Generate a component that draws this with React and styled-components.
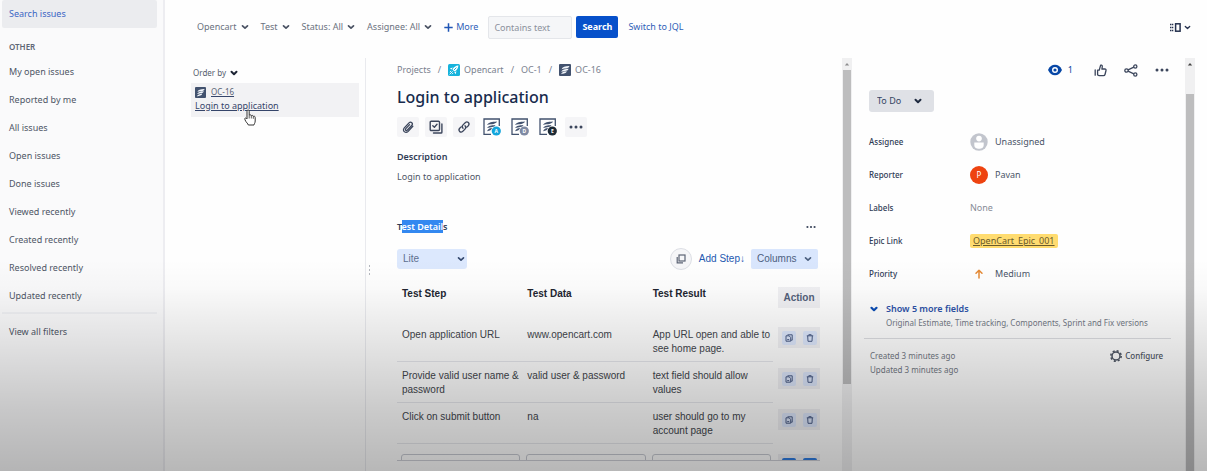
import React from "react";
import styled, { createGlobalStyle, css } from "styled-components";

const GlobalStyle = createGlobalStyle`
  *, *::before, *::after { box-sizing: border-box; }
  body { margin: 0; background: #fefefe; }
  body, button, input, select {
    font-family: "Noto Sans", "Open Sans", sans-serif;
    font-size: 9px;
    line-height: 14px;
    color: #4e5666;
  }
  button, input, select { margin: 0; padding: 0; border: 0; background: none; }
  button { display: inline-flex; align-items: center; justify-content: center; }
  a { color: inherit; text-decoration: none; }
  h1, h2, p, ul, dl, dd { margin: 0; padding: 0; }
  svg { display: block; flex: none; }
`;

const Shell = styled.div`
  position: relative;
  display: flex;
  height: 100vh;
  overflow: hidden;
`;

const Shade = styled.div`
  position: absolute;
  inset: auto 0 0 0;
  height: 45%;
  pointer-events: none;
  background: linear-gradient(
    rgba(0, 0, 0, 0) 0%,
    rgba(0, 0, 0, 0.02) 14%,
    rgba(0, 0, 0, 0.1) 40%,
    rgba(0, 0, 0, 0.2) 70%,
    rgba(0, 0, 0, 0.28) 100%
  );
`;

/* Sidebar */

const Sidebar = styled.nav`
  flex: none;
  width: 165px;
  padding: 0 6px 0 2px;
  border-right: 2px solid #ededf1;
  background: #fafafb;
`;

const NavList = styled.ul`
  list-style: none;
`;

const NavLink = styled.a`
  display: flex;
  align-items: center;
  height: 28px;
  padding: 0 7px;
  border-radius: 2px;
  ${(p) =>
    p.$active &&
    css`
      background: #ebecef;
      color: #3b66c4;
    `}
`;

const NavHeading = styled.h2`
  padding: 12px 7px 4px;
  font-size: 8px;
  line-height: 14px;
  font-weight: 600;
  color: #5e6675;
`;

const NavRule = styled.hr`
  margin: 2px 0 4px;
  border: 0;
  border-top: 2px solid #f0f1f4;
`;

/* Main column */

const Main = styled.main`
  flex: 1;
  min-width: 0;
  display: flex;
  flex-direction: column;
`;

const Toolbar = styled.header`
  display: flex;
  align-items: center;
  gap: 12px;
  height: 58px;
  padding: 0 16px 4px 32px;
`;

const FilterButton = styled.button`
  gap: 4px;
  color: #6b7280;
  svg { color: #4a5263; }
`;

const LinkButton = styled.button`
  gap: 3px;
  color: #2f5fb8;
`;

const SearchForm = styled.form`
  display: flex;
  align-items: center;
  gap: 4px;
  margin: 0 -2px;
`;

const SearchInput = styled.input`
  width: 84px;
  height: 23px;
  padding: 0 5px;
  border: 1px solid #e4e6ea;
  border-radius: 2px;
  background: #f5f6f8;
  &::placeholder { color: #8b919c; opacity: 1; }
`;

const PrimaryButton = styled.button`
  width: 42px;
  height: 22px;
  border-radius: 2px;
  background: #0650ca;
  color: #fff;
  font-weight: 700;
`;

const ViewButton = styled.button`
  gap: 3px;
  margin-left: auto;
  color: #26324f;
`;

const Columns = styled.div`
  flex: 1;
  min-height: 0;
  display: grid;
  grid-template-columns: 201px minmax(0, 1fr) 343px;
  padding-right: 12px;
`;

/* Issue list */

const ListPane = styled.section`
  padding: 8px 6px 0 26px;
  border-right: 1px solid #e9eaee;
`;

const OrderButton = styled.button`
  gap: 4px;
  padding: 0 2px;
  font-size: 8px;
  color: #555d6c;
  svg { color: #1c2434; }
`;

const IssueCard = styled.a`
  position: relative;
  display: block;
  height: 34px;
  margin-top: 3px;
  padding: 2px 4px;
  background: #f2f2f4;
  text-decoration: underline;
  color: #35456a;
`;

const IssueKey = styled.span`
  display: flex;
  align-items: center;
  gap: 5px;
  font-size: 8px;
  color: #596273;
`;

const Pointer = styled.svg`
  position: absolute;
  left: 53px;
  top: 26px;
`;

/* Issue detail */

const DetailPane = styled.section`
  display: flex;
  min-width: 0;
  min-height: 0;
`;

const Grip = styled.div`
  display: flex;
  flex: none;
  width: 31px;
  padding: 207px 0 0 2px;
`;

const DetailBody = styled.div`
  flex: 1;
  min-width: 0;
  display: flex;
  flex-direction: column;
  padding: 5px 22px 10px 0;
`;

const Breadcrumbs = styled.nav`
  display: flex;
  align-items: center;
  gap: 7px;
  color: #7a818e;
`;

const Crumb = styled.a`
  display: inline-flex;
  align-items: center;
  gap: 4px;
`;

const Title = styled.h1`
  margin-top: 9px;
  font-size: 16px;
  line-height: 22px;
  font-weight: 500;
  color: #172b4d;
`;

const Actions = styled.div`
  display: flex;
  gap: 6px;
  margin-top: 9px;
`;

const ActionButton = styled.button`
  width: 22px;
  height: 20px;
  border-radius: 2px;
  background: ${(p) => (p.$plain ? "none" : "#f5f5f7")};
  color: #3c465c;
`;

const Heading = styled.h2`
  font-size: 9px;
  line-height: 14px;
  font-weight: 600;
  color: #303c55;
`;

const Description = styled.section`
  margin-top: 13px;
  p { margin-top: 6px; }
`;

const TestHeader = styled.div`
  display: flex;
  align-items: center;
  justify-content: space-between;
  margin-top: 36px;
`;

const Selected = styled.mark`
  background: #3388f0;
  color: #fff;
`;

const MoreButton = styled.button`
  width: 18px;
  height: 14px;
  color: #3c465c;
`;

const TestControls = styled.div`
  display: flex;
  align-items: center;
  margin: 14px 2px 10px 0;
  font-family: "Liberation Sans", Arial, sans-serif;
`;

const SelectBox = styled.label`
  display: grid;
  align-items: center;
  width: ${(p) => p.$width};
  height: ${(p) => p.$height};
  border-radius: 3px;
  background: ${(p) => p.$fill};
  color: ${(p) => p.$ink};
  select, svg { grid-area: 1 / 1; }
  select {
    appearance: none;
    width: 100%;
    height: 100%;
    padding: 0 ${(p) => p.$inset};
    font-family: inherit;
    font-size: ${(p) => p.$size};
    color: ${(p) => p.$text};
  }
  svg {
    justify-self: end;
    margin-right: ${(p) => p.$arrow};
    pointer-events: none;
  }
`;

const RoundButton = styled.button`
  width: 22px;
  height: 22px;
  margin-left: auto;
  border: 1px solid #dddfe5;
  border-radius: 50%;
  background: #f6f6f8;
  color: #5d6475;
`;

const AddStep = styled.button`
  margin: 0 6px 0 7px;
  font-family: inherit;
  font-size: 10px;
  color: #2458b0;
`;

const ColumnsButton = styled.button`
  justify-content: space-between;
  width: 67px;
  height: 20px;
  padding: 0 6px;
  border-radius: 2px;
  background: #d9e6fd;
  font-family: inherit;
  font-size: 10px;
  color: #4c607f;
`;

const TableFrame = styled.div`
  flex: 1;
  min-height: 0;
  overflow: hidden;
  border-bottom: 1px solid #cdcfd6;
`;

const StepTable = styled.table`
  width: 100%;
  table-layout: fixed;
  border-collapse: separate;
  border-spacing: 0;
  font-family: "Liberation Sans", Arial, sans-serif;
  font-size: 10px;
  line-height: 14px;
  text-align: left;
  color: #42454c;
`;

const HeadCell = styled.th`
  height: 41px;
  padding: 7px 5px;
  vertical-align: top;
  font-weight: 700;
  color: #222530;
  &:last-child { width: 47px; padding-right: 0; }
`;

const Cell = styled.td`
  height: 41px;
  padding: 7px 2px 5px 5px;
  vertical-align: top;
  border-bottom: 1px solid #e6e7ec;
`;

const ActionCell = styled.td`
  padding: 6px 0 0 5px;
  vertical-align: top;
`;

const ActionBox = styled.div`
  display: flex;
  align-items: center;
  justify-content: space-around;
  height: 21px;
  background: #f0f0f3;
  color: #53607a;
`;

const StepButton = styled.button`
  width: 14px;
  height: 14px;
  border-radius: 2px;
  background: ${(p) => (p.$strong ? "#2d7be0" : "#dbe5fa")};
  color: #4a5c85;
`;

const EntryCell = styled.td`
  padding: 10px 2px 0 4px;
  vertical-align: top;
  &:last-child { padding: 10px 0 0 5px; }
`;

const EntryInput = styled.input`
  display: block;
  width: 100%;
  height: 24px;
  border: 1px solid #c6c9d1;
  border-radius: 3px;
`;

/* Scroll bars */

const ScrollTrack = styled.div`
  flex: none;
  display: flex;
  flex-direction: column;
  align-items: center;
  width: 10px;
  background: #f0f0f1;
  color: ${(p) => p.$arrow};
`;

const ScrollThumb = styled.div`
  width: 8px;
  height: ${(p) => p.$length};
  margin-top: ${(p) => p.$offset};
  background: #bdbdbe;
`;

/* Side panel */

const SidePane = styled.aside`
  display: flex;
  min-height: 0;
`;

const SideBody = styled.div`
  flex: 1;
  min-width: 0;
  padding: 4px 14px 0 12px;
`;

const SideActions = styled.div`
  display: flex;
  align-items: center;
  justify-content: flex-end;
  gap: 13px;
  height: 16px;
  color: #3c465c;
`;

const WatchButton = styled.button`
  gap: 6px;
  margin-right: 5px;
  color: #0b47a1;
`;

const StatusRow = styled.div`
  display: flex;
  margin: 12px 0 13px 5px;
`;

const Fields = styled.dl`
  padding-left: 5px;
`;

const Field = styled.div`
  display: grid;
  grid-template-columns: 101px 1fr;
  align-items: center;
  height: 33px;
`;

const FieldName = styled.dt`
  font-size: 8px;
  font-weight: 500;
  color: #303c55;
`;

const FieldValue = styled.dd`
  display: flex;
  align-items: center;
  gap: 7px;
  color: ${(p) => (p.$muted ? "#878c96" : "#4a5568")};
`;

const Avatar = styled.span`
  display: grid;
  place-items: center;
  width: 18px;
  height: 18px;
  border-radius: 50%;
  background: #ee4310;
  font-size: 8px;
  color: #fff;
`;

const EpicTag = styled.a`
  padding: 0 3px;
  border-radius: 2px;
  background: #ffdc70;
  text-decoration: underline;
  color: #6a5a2c;
`;

const MoreFields = styled.button`
  display: grid;
  grid-template-columns: 16px 1fr;
  row-gap: 0;
  align-items: center;
  justify-content: start;
  width: 100%;
  margin-top: 12px;
  padding-left: 6px;
  text-align: left;
  color: #0b4db5;
  strong { font-weight: 600; color: #2c52a8; }
  small { grid-column: 2; font-size: 8px; line-height: 13px; color: #737985; }
`;

const SideFooter = styled.footer`
  display: flex;
  justify-content: space-between;
  align-items: flex-start;
  margin-top: 9px;
  padding: 10px 8px 0 6px;
  border-top: 1px solid #dcdde1;
  font-size: 8px;
  color: #727883;
`;

const ConfigureButton = styled.button`
  gap: 3px;
  font-size: 8px;
  font-weight: 500;
  color: #4d5563;
`;

/* Drawings */

const Chevron = ({ size = 8, weight = 2 }) => (
  <svg width={size} height={size} viewBox="0 0 8 8" fill="none" stroke="currentColor" strokeWidth={weight} strokeLinecap="round" strokeLinejoin="round" aria-hidden="true">
    <path d="M1.5 2.8 4 5.2 6.5 2.8" />
  </svg>
);

const TestIcon = ({ size = 12 }) => (
  <svg width={size} height={size} viewBox="0 0 12 12" aria-hidden="true">
    <rect width="12" height="12" rx="1" fill="#42526e" />
    <path d="M2.6 5.2C3.4 2.9 6 2.4 10.4 2.1 10 4.6 7 4.3 2.600 5.200ZM2.200 7.700C3.400 5.400 6 5.100 9.600 4.700 9 7.200 6 6.800 2.200 7.700ZM2 10.200C3 8 4.800 7.700 7.800 7.300 7.200 9.700 5 9.300 2 10.200Z" fill="#f2f6fb" />
  </svg>
);

const ProjectIcon = () => (
  <svg width="12" height="12" viewBox="0 0 12 12" aria-hidden="true">
    <rect width="12" height="12" rx="1.5" fill="#16b3dc" />
    <path d="M10.400 1.600C7.800 1.800 5.600 3.200 4.500 5.500L6.500 7.500C8.900 6.400 10.300 4.200 10.400 1.600Z" fill="#fff" />
    <path d="M4.800 3.500 1.800 4.400 3.700 5.600ZM8.400 7.300 7.700 10.200 6.300 8.300Z" fill="#fff" />
    <path d="M4.600 7.400 1.600 10.400M3.100 6.900 1.800 8.200M5.200 8.900 3.900 10.200" stroke="#fff" strokeWidth=".9" />
    <path d="M8.400 3.600 6 6" stroke="#16b3dc" strokeWidth="1" />
  </svg>
);

const BadgeIcon = ({ letter, fill }) => (
  <svg width="20" height="20" viewBox="0 0 20 20" aria-hidden="true">
    <path d="M17.300 9V2H2v15.300h7" fill="none" stroke="#42526e" strokeWidth="1.300" />
    <path d="M5 8C7 5 9.500 5 15 4.500 13.800 7.400 10 6.800 5 8ZM5 11C7 8.300 9 8.400 13.500 7.900 12.300 10.400 9 9.900 5 11ZM5 14.200C6.300 11.600 7.500 11.300 10 11 9.500 13.300 8 13.500 5 14.200Z" fill="#42526e" />
    <circle cx="14.300" cy="14" r="4.600" fill={fill} />
    <text x="14.300" y="16" textAnchor="middle" fontFamily="Noto Sans, sans-serif" fontSize="5" fontWeight="700" fill="#fff">{letter}</text>
  </svg>
);

const Dots = ({ width = 14 }) => (
  <svg width={width} height="4" viewBox="0 0 14 4" fill="currentColor" aria-hidden="true">
    <circle cx="2" cy="2" r="1.5" />
    <circle cx="7" cy="2" r="1.5" />
    <circle cx="12" cy="2" r="1.5" />
  </svg>
);

const ClipIcon = () => (
  <svg width="14" height="14" viewBox="0 0 14 14" fill="none" stroke="currentColor" strokeWidth="1.3" strokeLinecap="round" aria-hidden="true">
    <path d="M11.8 6.3 7.2 11.4C4.5 14 .8 10.6 3.3 7.9L8 2.9C10 1 12.5 3.4 10.7 5.4L6.4 10C5.2 11.2 3.7 9.8 4.8 8.6L8.6 4.6" />
  </svg>
);

const ChecklistIcon = () => (
  <svg width="14" height="14" viewBox="0 0 14 14" fill="none" stroke="currentColor" strokeWidth="1.4" strokeLinecap="round" strokeLinejoin="round" aria-hidden="true">
    <rect x="1.2" y="1.2" width="9.3" height="9.3" rx="1" />
    <path d="M3.8 5.7 5.4 7.2 8 4.2M12.9 4v8.2c0 .5-.3.8-.8.8H4.5" />
  </svg>
);

const ChainIcon = () => (
  <svg width="14" height="14" viewBox="0 0 14 14" fill="none" stroke="currentColor" strokeWidth="1.3" strokeLinecap="round" aria-hidden="true">
    <path d="M6 8.2C4.9 7 5.1 5.8 6 4.9L8.2 2.7C10.5.7 13.3 3.4 11.3 5.7L9.9 7.1M8 5.8C9.1 7 8.9 8.2 8 9.1L5.8 11.3C3.5 13.3.7 10.6 2.7 8.3L4.1 6.9" />
  </svg>
);

const StackIcon = ({ size = 10 }) => (
  <svg width={size} height={size} viewBox="0 0 10 10" fill="none" stroke="currentColor" strokeWidth="1.2" aria-hidden="true">
    <rect x="3" y="1" width="6" height="6" />
    <path d="M1.2 3v5.8H7" />
  </svg>
);

const CopyStepIcon = () => (
  <svg width="8" height="8" viewBox="0 0 8 8" fill="none" stroke="currentColor" aria-hidden="true">
    <path d="M2.5 .8h4.7v5.400H6M1 1.800v5.400h4.700V3.600L4.200 1.800z" />
    <path d="M2.200 5.600h2" />
  </svg>
);

const TrashIcon = () => (
  <svg width="8" height="8" viewBox="0 0 8 8" fill="none" stroke="currentColor" aria-hidden="true">
    <path d="M.8 1.8h6.4M2.8 1.6V.7h2.4v.9M1.7 2l.3 5.3h4L6.3 2" />
  </svg>
);

const EyeIcon = () => (
  <svg width="14" height="12" viewBox="0 0 14 12" aria-hidden="true">
    <path d="M0 6C1.600 2.400 4 .8 7 .8S12.400 2.400 14 6C12.400 9.600 10 11.200 7 11.200S1.600 9.600 0 6Z" fill="#0747a6" />
    <circle cx="7" cy="6" r="2.300" fill="none" stroke="#fff" strokeWidth="1.400" />
  </svg>
);

const ThumbIcon = () => (
  <svg width="13" height="13" viewBox="0 0 13 13" fill="none" stroke="currentColor" strokeWidth="1.300" strokeLinejoin="round" strokeLinecap="round" aria-hidden="true">
    <path d="M1.200 6v5.200M3.600 6.200h1.600L6.500 1.600C6.700.8 8.500.9 8.300 2.700L7.900 5h2.900c1 0 1.400.7 1.200 1.500l-1 4c-.2.8-.7 1.200-1.500 1.200H5.200L3.600 11Z" />
  </svg>
);

const ShareIcon = () => (
  <svg width="14" height="13" viewBox="0 0 14 13" fill="none" stroke="currentColor" strokeWidth="1.300" aria-hidden="true">
    <circle cx="2.500" cy="6.500" r="1.700" />
    <circle cx="11.300" cy="2.500" r="1.600" />
    <circle cx="11.300" cy="10.500" r="1.600" />
    <path d="M4.100 5.800 9.800 3.200M4.100 7.200 9.800 9.800" />
  </svg>
);

const PersonIcon = () => (
  <svg width="18" height="18" viewBox="0 0 18 18" aria-hidden="true">
    <circle cx="9" cy="9" r="8.700" fill="#c2c5cd" />
    <circle cx="9" cy="5.600" r="2.800" fill="#fff" />
    <path d="M4.300 9.500h9.400v2.200c0 3-2 4-4.700 4s-4.700-1-4.700-4Z" fill="#fff" />
  </svg>
);

const PriorityIcon = () => (
  <svg width="18" height="10" viewBox="0 0 18 10" fill="none" stroke="#e58a35" strokeWidth="1.500" strokeLinecap="round" strokeLinejoin="round" aria-hidden="true">
    <path d="M9 9V1.500M6 4.300 9 1.300l3 3" />
  </svg>
);

const GearIcon = () => (
  <svg width="12" height="12" viewBox="0 0 12 12" fill="none" stroke="currentColor" aria-hidden="true">
    <circle cx="6" cy="6" r="4" strokeWidth="1.500" />
    <circle cx="6" cy="6" r="5.200" strokeWidth="1.500" strokeDasharray="2.084 2" />
  </svg>
);

const LayoutIcon = () => (
  <svg width="11" height="9" viewBox="0 0 11 9" aria-hidden="true">
    <path d="M0 1.500h3.500M0 4.500h3.500M0 7.500h3.500" stroke="currentColor" strokeWidth="1.600" strokeDasharray="1.400 .5" />
    <rect x="5.600" y=".8" width="4.500" height="7.400" fill="none" stroke="currentColor" strokeWidth="1.500" />
  </svg>
);

const PlusIcon = () => (
  <svg width="9" height="9" viewBox="0 0 9 9" stroke="#1f55b5" strokeWidth="1.500" aria-hidden="true">
    <path d="M4.500 .3v8.400M.3 4.500h8.400" />
  </svg>
);

const UpArrow = () => (
  <svg width="10" height="12" viewBox="0 0 10 12" fill="currentColor" aria-hidden="true">
    <path d="M2.800 7.500 5 5l2.200 2.500Z" />
  </svg>
);

const GripDots = () => (
  <svg width="3" height="10" viewBox="0 0 3 10" fill="#b4b7be" aria-hidden="true">
    <rect x="1" width="1" height="2" />
    <rect x="1" y="4" width="1" height="2" />
    <rect x="1" y="8" width="1" height="2" />
  </svg>
);

const HandPointer = () => (
  <Pointer width="12" height="17" viewBox="0 0 12 17" aria-hidden="true">
    <path d="M3 10V2.200C3 .5 5.200.5 5.200 2.200V6.300C5.500 5.500 7.200 5.600 7.300 6.800 7.800 6 9.200 6.300 9.300 7.500 9.900 6.900 11.200 7.200 11.200 8.500V12C11.200 14 10 15 10 16H4.300C4 14.500 2 13.500 1 10.800.200 9 1.600 8.200 3 10Z" fill="#fff" stroke="#333" strokeWidth="1" strokeLinejoin="round" />
    <path d="M5.200 6.300V9.500M7.300 7V9.500M9.300 7.600V9.800" stroke="#333" strokeWidth=".8" />
  </Pointer>
);

const navItems = [
  "My open issues",
  "Reported by me",
  "All issues",
  "Open issues",
  "Done issues",
  "Viewed recently",
  "Created recently",
  "Resolved recently",
  "Updated recently",
];

const filters = ["Opencart", "Test", "Status: All", "Assignee: All"];

const steps = [
  ["Open application URL", "www.opencart.com", "App URL open and able to see home page."],
  ["Provide valid user name & password", "valid user & password", "text field should allow values"],
  ["Click on submit button", "na", "user should go to my account page"],
];

export default function App() {
  return (
    <Shell>
      <GlobalStyle />
      <Sidebar aria-label="Filters">
        <NavLink href="#search" $active>Search issues</NavLink>
        <NavHeading>OTHER</NavHeading>
        <NavList>
          {navItems.map((item) => (
            <li key={item}><NavLink href="#filter">{item}</NavLink></li>
          ))}
        </NavList>
        <NavRule />
        <NavLink href="#all">View all filters</NavLink>
      </Sidebar>

      <Main>
        <Toolbar>
          {filters.map((label) => (
            <FilterButton key={label} type="button">{label}<Chevron weight={1.7} /></FilterButton>
          ))}
          <LinkButton type="button"><PlusIcon />More</LinkButton>
          <SearchForm onSubmit={(e) => e.preventDefault()}>
            <SearchInput placeholder="Contains text" aria-label="Contains text" />
            <PrimaryButton type="submit">Search</PrimaryButton>
          </SearchForm>
          <LinkButton type="button">Switch to JQL</LinkButton>
          <ViewButton type="button" aria-label="Change view"><LayoutIcon /><Chevron size={7} weight={1.5} /></ViewButton>
        </Toolbar>

        <Columns>
          <ListPane>
            <OrderButton type="button">Order by<Chevron /></OrderButton>
            <IssueCard href="#OC-16">
              <IssueKey><TestIcon size={11} />OC-16</IssueKey>
              Login to application
              <HandPointer />
            </IssueCard>
          </ListPane>

          <DetailPane>
            <Grip><GripDots /></Grip>
            <DetailBody>
              <Breadcrumbs aria-label="Breadcrumb">
                <Crumb href="#projects">Projects</Crumb>/
                <Crumb href="#opencart"><ProjectIcon />Opencart</Crumb>/
                <Crumb href="#OC-1">OC-1</Crumb>/
                <Crumb href="#OC-16"><TestIcon />OC-16</Crumb>
              </Breadcrumbs>
              <Title>Login to application</Title>
              <Actions>
                <ActionButton type="button" aria-label="Attach"><ClipIcon /></ActionButton>
                <ActionButton type="button" aria-label="Add a child issue"><ChecklistIcon /></ActionButton>
                <ActionButton type="button" aria-label="Link issue"><ChainIcon /></ActionButton>
                <ActionButton type="button" $plain><BadgeIcon letter="A" fill="#13a5dc" /></ActionButton>
                <ActionButton type="button" $plain><BadgeIcon letter="D" fill="#7f8aa3" /></ActionButton>
                <ActionButton type="button" $plain><BadgeIcon letter="E" fill="#1d2a35" /></ActionButton>
                <ActionButton type="button" aria-label="More actions"><Dots /></ActionButton>
              </Actions>
              <Description>
                <Heading>Description</Heading>
                <p>Login to application</p>
              </Description>
              <TestHeader>
                <Heading>T<Selected>est Detail</Selected>s</Heading>
                <MoreButton type="button" aria-label="More"><Dots width={10} /></MoreButton>
              </TestHeader>
              <TestControls>
                <SelectBox $width="70px" $height="20px" $fill="#dce8fd" $ink="#34496e" $text="#5e6f8e" $size="10px" $inset="6px" $arrow="2px">
                  <select aria-label="Mode" defaultValue="Lite"><option>Lite</option></select>
                  <Chevron weight={1.6} />
                </SelectBox>
                <RoundButton type="button" aria-label="Copy steps"><StackIcon /></RoundButton>
                <AddStep type="button">Add Step↓</AddStep>
                <ColumnsButton type="button">Columns<Chevron weight={1.6} /></ColumnsButton>
              </TestControls>
              <TableFrame>
                <StepTable>
                  <thead>
                    <tr>
                      <HeadCell scope="col">Test Step</HeadCell>
                      <HeadCell scope="col">Test Data</HeadCell>
                      <HeadCell scope="col">Test Result</HeadCell>
                      <HeadCell scope="col"><ActionBox>Action</ActionBox></HeadCell>
                    </tr>
                  </thead>
                  <tbody>
                    {steps.map((row) => (
                      <tr key={row[0]}>
                        {row.map((text) => <Cell key={text}>{text}</Cell>)}
                        <ActionCell>
                          <ActionBox>
                            <StepButton type="button" aria-label="Copy step"><CopyStepIcon /></StepButton>
                            <StepButton type="button" aria-label="Delete step"><TrashIcon /></StepButton>
                          </ActionBox>
                        </ActionCell>
                      </tr>
                    ))}
                    <tr>
                      <EntryCell><EntryInput aria-label="New test step" /></EntryCell>
                      <EntryCell><EntryInput aria-label="New test data" /></EntryCell>
                      <EntryCell><EntryInput aria-label="New test result" /></EntryCell>
                      <EntryCell>
                        <ActionBox>
                          <StepButton type="button" aria-label="Save step" $strong />
                          <StepButton type="button" aria-label="Clear step" $strong />
                        </ActionBox>
                      </EntryCell>
                    </tr>
                  </tbody>
                </StepTable>
              </TableFrame>
            </DetailBody>
            <ScrollTrack $arrow="#8d8d8f"><UpArrow /><ScrollThumb $length="76%" $offset="0" /></ScrollTrack>
          </DetailPane>

          <SidePane>
            <SideBody>
              <SideActions>
                <WatchButton type="button" aria-label="Watchers"><EyeIcon />1</WatchButton>
                <MoreButton type="button" aria-label="Vote"><ThumbIcon /></MoreButton>
                <MoreButton type="button" aria-label="Share"><ShareIcon /></MoreButton>
                <MoreButton type="button" aria-label="More"><Dots /></MoreButton>
              </SideActions>
              <StatusRow>
                <SelectBox $width="65px" $height="22px" $fill="#dfe1e6" $ink="#1f2a40" $text="#344563" $size="9px" $inset="8px" $arrow="12px">
                  <select aria-label="Status" defaultValue="To Do"><option>To Do</option></select>
                  <Chevron />
                </SelectBox>
              </StatusRow>
              <Fields>
                <Field><FieldName>Assignee</FieldName><FieldValue><PersonIcon />Unassigned</FieldValue></Field>
                <Field><FieldName>Reporter</FieldName><FieldValue><Avatar>P</Avatar>Pavan</FieldValue></Field>
                <Field><FieldName>Labels</FieldName><FieldValue $muted>None</FieldValue></Field>
                <Field><FieldName>Epic Link</FieldName><FieldValue><EpicTag href="#epic">OpenCart_Epic_001</EpicTag></FieldValue></Field>
                <Field><FieldName>Priority</FieldName><FieldValue><PriorityIcon />Medium</FieldValue></Field>
              </Fields>
              <MoreFields type="button">
                <Chevron weight={2.2} />
                <strong>Show 5 more fields</strong>
                <small>Original Estimate, Time tracking, Components, Sprint and Fix versions</small>
              </MoreFields>
              <SideFooter>
                <div>
                  <p>Created 3 minutes ago</p>
                  <p>Updated 3 minutes ago</p>
                </div>
                <ConfigureButton type="button"><GearIcon />Configure</ConfigureButton>
              </SideFooter>
            </SideBody>
            <ScrollTrack $arrow="#444"><UpArrow /><ScrollThumb $length="100%" $offset="24px" /></ScrollTrack>
          </SidePane>
        </Columns>
      </Main>
      <Shade />
    </Shell>
  );
}
